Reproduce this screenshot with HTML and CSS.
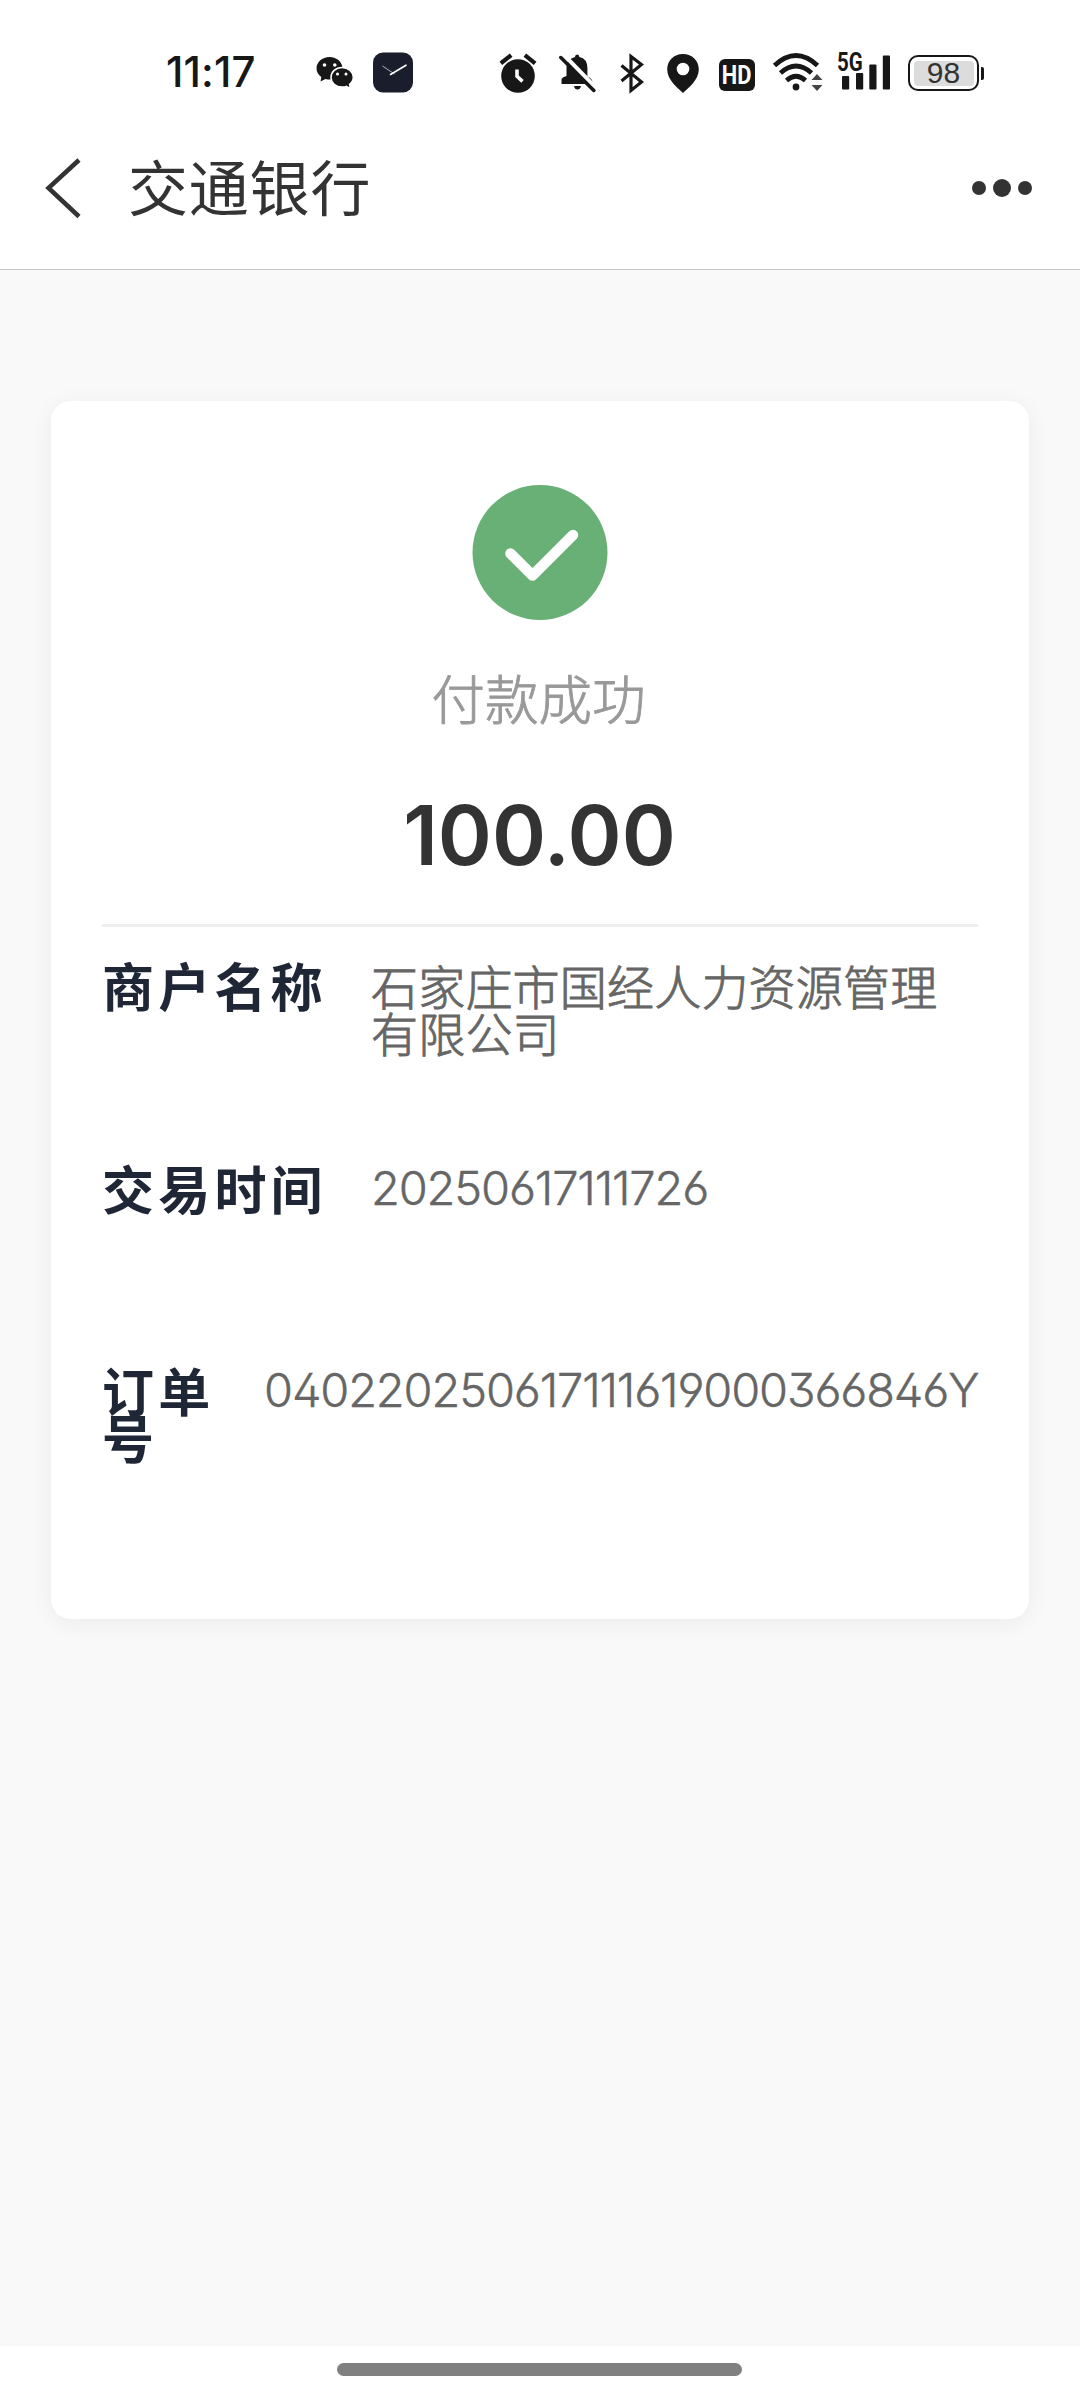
FILE: index.html
```html
<!DOCTYPE html>
<html lang="zh-CN">
<head>
<meta charset="utf-8">
<title>交通银行</title>
<link rel="stylesheet" href="styles.css">
</head>
<body>
<div class="screen">
  <div class="status">
    <span class="time">11:17</span>
    <div class="apps">
      <svg width="40" height="42" viewBox="315 52 40 42"><path d="M329.500 57c-7.300 0-13 5-13 11.300 0 3.700 1.900 6.700 4.800 8.700l-.8 4.500 5-2.600c9.500 2.500 17-3 17-10.600 0-6.300-5.700-11.300-13-11.300z" fill="#171717"/><path d="M342 67.500c-6.200 0-11 4.300-11 9.800s4.800 9.800 11 9.800c1.500 0 3-.2 4.300-.7l4 2.200-.7-4.200c2.300-1.800 3.700-4.300 3.700-7.100 0-5.500-5-9.800-11.300-9.800z" fill="#171717" stroke="#fff" stroke-width="1.500"/><g fill="#fff"><circle cx="324.500" cy="65" r="1.800"/><circle cx="334.800" cy="65" r="1.800"/><circle cx="337.500" cy="74" r="1.500"/><circle cx="346" cy="74" r="1.500"/></g></svg>
      <svg width="40" height="42" viewBox="373 52 40 42"><rect x="373" y="52.500" width="40" height="40" rx="10" fill="#191d2c"/><path d="M382.500 66l12 8" stroke="#aeb2bd" stroke-width="1"/><path d="M390.500 74.500l15.500-9.300" stroke="#fff" stroke-width="1.600" stroke-linecap="round"/></svg>
    </div>
    <div class="icons">
      <svg width="38" height="42" viewBox="499 52 38 42"><circle cx="518" cy="76" r="16.800" fill="#171717"/><path d="M502.500 62l7-5.500M533.500 62l-7-5.500" stroke="#171717" stroke-width="4.200" stroke-linecap="square"/><path d="M517 69.500v6.800l5.500 5" stroke="#fff" stroke-width="3.600" fill="none"/></svg>
      <svg class="bell" width="38" height="42" viewBox="558 52 38 42"><path d="M575 57q0-2.500 2.200-2.500T579.400 57q8 1.800 8 11v8.500q5.500 2 5.500 7.500H561.500v-5q1-2 5-3V67q0-7.500 8.500-10z" fill="#171717"/><path d="M574 86h7q-.8 3.500-3.500 3.500T574 86z" fill="#171717"/><path d="M563 54l34 35" stroke="#fff" stroke-width="4"/><path d="M560.800 57.500l33 33" stroke="#171717" stroke-width="3.500" stroke-linecap="round"/></svg>
      <svg class="bt" width="26" height="42" viewBox="618 52 26 42"><path d="M621.500 65.500l20 16.500-10.500 8.500v-34l10.500 8-20 16.500" fill="none" stroke="#171717" stroke-width="3.200"/></svg>
      <svg class="pin" width="34" height="42" viewBox="666 52 34 42"><path fill-rule="evenodd" d="M683 54c-9.200 0-15.800 6.700-15.800 15.400C667.200 80 678 88 683 93c5-5 15.800-13 15.800-23.600C698.800 60.700 692.200 54 683 54zm0 8.700a6.300 6.300 0 1 1 0 12.600 6.300 6.300 0 0 1 0-12.600z" fill="#171717"/></svg>
      <div class="hd"><span>HD</span></div>
      <svg class="wifi" width="52" height="42" viewBox="772 52 52 42"><g fill="none" stroke="#171717" stroke-width="4.800"><path d="M774.500 65.500q21.500-20 43 0"/><path d="M780.500 73q15.500-14 31 0"/><path d="M786.500 80.500q9.500-8.500 19 0"/></g><circle cx="796" cy="87" r="3.400" fill="#171717"/><path d="M811.500 80l5.500-6 5.500 6zM811.500 85l5.500 6 5.500-6z" fill="#444"/></svg>
      <div class="signal">
        <svg width="53" height="42" viewBox="837 52 53 42"><g fill="#171717"><rect x="842" y="76" width="7.200" height="13.500" rx="1"/><rect x="856" y="73" width="7.200" height="16.500" rx="1"/><rect x="869.300" y="64.500" width="7.200" height="25" rx="1"/><rect x="882.800" y="55.500" width="7.200" height="34" rx="1"/></g></svg>
        <span class="net">5G</span>
      </div>
      <div class="battery"><span class="level">98</span></div>
      <i class="cap"></i>
    </div>
  </div>
  <header class="nav">
    <svg class="back" width="40" height="62" viewBox="44 157 40 62"><path d="M79 160L48.500 188 79 216.500" fill="none" stroke="#333" stroke-width="4.500"/></svg>
    <h1 class="title">交通银行</h1>
    <div class="more"><i></i><i class="mid"></i><i></i></div>
  </header>
  <main class="page">
    <section class="card">
      <svg class="ok" width="136" height="136" viewBox="0 0 136 136"><circle cx="68" cy="67.500" r="67.500" fill="#69b077"/><path d="M38.500 68.500L60.500 90.500 101 50" fill="none" stroke="#fff" stroke-width="10.500" stroke-linecap="round" stroke-linejoin="round"/></svg>
      <p class="state">付款成功</p>
      <p class="amount">100.00</p>
      <dl class="rows">
        <div class="row"><dt>商户名称</dt><dd>石家庄市国经人力资源管理有限公司</dd></div>
        <div class="row"><dt>交易时间</dt><dd class="num">20250617111726</dd></div>
        <div class="row order"><dt>订单号</dt><dd class="num">040220250617111619000366846Y</dd></div>
      </dl>
    </section>
  </main>
  <footer class="home"><i></i></footer>
</div>
</body>
</html>
```
FILE: styles.css
```css
* { box-sizing: border-box; margin: 0; padding: 0; }
body {
  background: #fff;
  font-family: "Noto Sans CJK SC", sans-serif;
}
.screen {
  width: 1080px;
  height: 2400px;
  display: flex;
  flex-direction: column;
  overflow: hidden;
}
svg { display: block; flex: none; }

.status {
  height: 130px;
  padding: 52px 96px 0 166px;
  display: flex;
  align-items: flex-start;
}
.time {
  width: 149px;
  font: 500 42px/40px Inter, sans-serif;
  letter-spacing: 0.100px;
  color: #171717;
}
.apps { display: flex; gap: 18px; }
.icons { display: flex; margin-left: 86px; }
.bell { margin-left: 21px; }
.bt { margin-left: 22px; }
.pin { margin-left: 22px; }
.hd {
  width: 36px;
  height: 32px;
  margin: 7px 0 0 19px;
  display: flex;
  justify-content: center;
  border-radius: 6px;
  background: #171717;
  color: #fff;
  font: bold 26px/32px Roboto, sans-serif;
}
.hd span { transform: scaleX(0.840); }
.wifi { margin-left: 17px; }
.signal { position: relative; margin-left: 13px; }
.net {
  position: absolute;
  left: 0;
  top: 0;
  font: bold 25px/21px Roboto, sans-serif;
  color: #171717;
  transform: scaleX(0.820);
  transform-origin: left;
  text-shadow: 0 2px 0 #fff, 2px 2px 0 #fff;
}
.battery {
  width: 71px;
  height: 36px;
  margin: 3px 0 0 18px;
  padding: 3.500px;
  border: 2.500px solid #171717;
  border-radius: 10px;
}
.level {
  display: block;
  height: 25px;
  border-radius: 4px;
  background: #dcdcdc;
  color: #333;
  font: 30px/24px "Liberation Sans", sans-serif;
  text-align: center;
}
.cap {
  width: 3px;
  height: 13px;
  margin: 15px 0 0 2px;
  border-radius: 0 2px 2px 0;
  background: #171717;
}

.nav {
  height: 140px;
  padding: 27px 48px 0 44px;
  display: flex;
  align-items: flex-start;
  border-bottom: 1px solid #c4c4c4;
}
.title {
  margin: -3px 0 0 44px;
  font-size: 60px;
  line-height: 62px;
  font-weight: 400;
  letter-spacing: 0.800px;
  color: #333;
}
.more {
  height: 62px;
  margin-left: auto;
  display: flex;
  align-items: center;
  gap: 7px;
}
.more i {
  width: 14px;
  height: 14px;
  border-radius: 50%;
  background: #333;
}
.more .mid { width: 18px; height: 18px; }

.page {
  flex: 1;
  padding: 131px 51px 0;
  background: #f9f9f9;
}
.card {
  height: 1218px;
  padding: 84px 51px 0;
  display: flex;
  flex-direction: column;
  align-items: center;
  border-radius: 20px;
  background: #fff;
  box-shadow: 0 4px 24px rgba(0, 0, 0, 0.060);
}
.state {
  margin: 46px 3px 0 0;
  font-size: 53.500px;
  line-height: 60px;
  font-weight: 300;
  color: #999;
  -webkit-text-stroke: 0.900px #999;
}
.amount {
  margin: 59px 1px 0 0;
  font: 600 82px/100px Inter, sans-serif;
  color: #333;
}
.rows {
  width: 876px;
  margin-top: 38px;
  border-top: 3px solid #eee;
}
.row {
  height: 202.500px;
  padding-top: 34px;
  display: flex;
  line-height: 47px;
}
.row dt {
  width: 269px;
  flex: none;
  font-size: 52px;
  font-weight: 700;
  letter-spacing: 4.200px;
  color: #1f2635;
}
.row dd {
  width: 575px;
  font-size: 47px;
  font-weight: 300;
  letter-spacing: 0.200px;
  color: #666;
  -webkit-text-stroke: 0.900px #666;
}
.row .num {
  width: auto;
  font-family: Inter, sans-serif;
  font-feature-settings: "ss01";
  letter-spacing: -1.150px;
  white-space: nowrap;
  -webkit-text-stroke: 0.400px #666;
}
.order dt { width: 115px; margin-right: 47px; }

.home {
  height: 54px;
  padding: 17px 1px 0 0;
  display: flex;
  justify-content: center;
}
.home i {
  width: 405px;
  height: 13px;
  border-radius: 7px;
  background: #808080;
}
```
